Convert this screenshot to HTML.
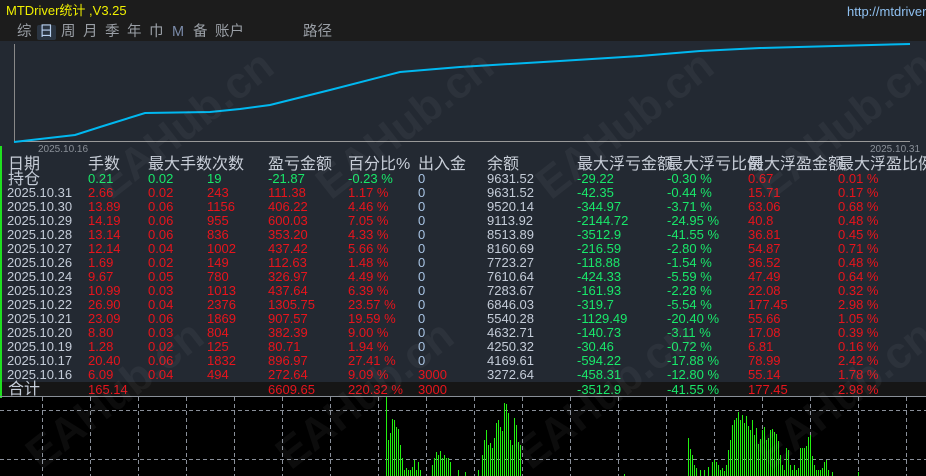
<!DOCTYPE html>
<html style="width:926px;height:476px;overflow:hidden"><head><meta charset="utf-8"><style>
*{margin:0;padding:0;box-sizing:border-box}
body{width:926px;height:476px;overflow:hidden;background:#000;font-family:"Liberation Sans","Noto Sans CJK SC",sans-serif;position:relative}
.a{position:absolute;white-space:nowrap}
#top{left:0;top:0;width:926px;height:41px;background:#1c1c1c}
#mid{left:0;top:41px;width:926px;height:341px;background:#232932}
#sum{left:0;top:382px;width:926px;height:14px;background:#161616}
.t{font-size:14.5px;color:#9a9fa6;top:24px;line-height:17px}
.r{font-size:13px;line-height:14px;height:14px}
.h{font-size:16px;color:#c8ced8;top:156px;line-height:17px}
.d{color:#c4ccd8}.R{color:#e8141c}.G{color:#19e86a}.B{color:#a8c4e4}
.wm{position:absolute;font-size:44px;font-weight:bold;color:rgba(200,200,200,0.06);transform:rotate(-38deg);white-space:nowrap}
</style></head><body>
<div class="a" id="top"></div>
<div class="a" id="mid"></div>
<div class="a" id="sum"></div>
<div class="a" style="left:0;top:146px;width:2px;height:252px;background:#20e020"></div>
<div class="a" style="left:6px;top:3px;font-size:13px;color:#f0f000;line-height:16px">MTDriver统计 ,V3.25</div>
<div class="a" style="left:847px;top:4px;font-size:13px;color:#8fc0f0;line-height:16px">http://mtdriver</div>
<div class="a" style="left:37px;top:25px;width:19px;height:15px;background:#2a3441;border-radius:2px"></div>
<div class="a t" style="left:17px">综</div><div class="a t" style="left:39px;color:#b8d0f0">日</div><div class="a t" style="left:61px">周</div><div class="a t" style="left:83px">月</div><div class="a t" style="left:105px">季</div><div class="a t" style="left:127px">年</div><div class="a t" style="left:149px">巾</div><div class="a t" style="left:172px;color:#7a8aa8">M</div><div class="a t" style="left:193px">备</div><div class="a t" style="left:215px">账户</div><div class="a t" style="left:303px">路径</div>
<svg class="a" style="left:0;top:0" width="926" height="476">
<line x1="14.5" y1="44" x2="14.5" y2="142" stroke="#888" stroke-width="1"/>
<line x1="14" y1="141.5" x2="910" y2="141.5" stroke="#999" stroke-width="1"/>
<polyline fill="none" stroke="#00b8f0" stroke-width="2" points="14,142 40,139 75,135 100,127 145,113 210,112 240,109 270,105 330,90 400,72 460,67 560,61 640,56 700,51 760,48 910,44"/>
<text x="38" y="152" font-size="10" fill="#8a9098" font-family="Liberation Sans">2025.10.16</text>
<text x="870" y="152" font-size="10" fill="#8a9098" font-family="Liberation Sans">2025.10.31</text>
<line x1="0" y1="396.5" x2="926" y2="396.5" stroke="#8a9098"/>
<g stroke="#8a909a" stroke-dasharray="4,3" stroke-width="1">
<line x1="0" y1="410.5" x2="926" y2="410.5"/><line x1="0" y1="459.5" x2="926" y2="459.5"/>
<line x1="42.5" y1="397" x2="42.5" y2="476"/><line x1="90.5" y1="397" x2="90.5" y2="476"/><line x1="138.5" y1="397" x2="138.5" y2="476"/><line x1="186.5" y1="397" x2="186.5" y2="476"/><line x1="234.5" y1="397" x2="234.5" y2="476"/><line x1="282.5" y1="397" x2="282.5" y2="476"/><line x1="330.5" y1="397" x2="330.5" y2="476"/><line x1="378.5" y1="397" x2="378.5" y2="476"/><line x1="426.5" y1="397" x2="426.5" y2="476"/><line x1="474.5" y1="397" x2="474.5" y2="476"/><line x1="522.5" y1="397" x2="522.5" y2="476"/><line x1="570.5" y1="397" x2="570.5" y2="476"/><line x1="618.5" y1="397" x2="618.5" y2="476"/><line x1="666.5" y1="397" x2="666.5" y2="476"/><line x1="714.5" y1="397" x2="714.5" y2="476"/><line x1="762.5" y1="397" x2="762.5" y2="476"/><line x1="810.5" y1="397" x2="810.5" y2="476"/><line x1="858.5" y1="397" x2="858.5" y2="476"/><line x1="906.5" y1="397" x2="906.5" y2="476"/>
</g>
<path stroke="#22f010" stroke-width="1" fill="none" d="M386.5 397V476M388.5 440V476M390.5 433V476M392.5 419V476M394.5 420V476M396.5 427V476M398.5 429V476M400.5 445V476M402.5 458V476M404.5 470V476M406.5 468V476M408.5 470V476M410.5 470V476M412.5 467V476M414.5 460V476M416.5 470V476M418.5 462V476M420.5 470V476M432.5 465V476M434.5 458V476M436.5 452V476M438.5 455V476M440.5 451V476M442.5 458V476M444.5 455V476M446.5 458V476M448.5 458V476M450.5 462V476M458.5 470V476M465.5 472V476M478.5 470V476M482.5 455V476M484.5 440V476M486.5 430V476M488.5 445V476M490.5 443V476M492.5 448V476M494.5 438V476M496.5 423V476M498.5 420V476M500.5 427V476M502.5 431V476M504.5 403V476M506.5 404V476M508.5 413V476M510.5 440V476M512.5 445V476M514.5 418V476M516.5 425V476M518.5 442V476M520.5 445V476M624.5 474V476M688.5 438V476M690.5 449V476M692.5 455V476M694.5 465V476M696.5 468V476M700.5 470V476M704.5 470V476M708.5 467V476M712.5 462V476M714.5 460V476M716.5 462V476M718.5 465V476M720.5 470V476M722.5 468V476M724.5 471V476M726.5 465V476M728.5 450V476M730.5 440V476M732.5 425V476M734.5 420V476M736.5 418V476M738.5 412V476M740.5 420V476M742.5 415V476M744.5 423V476M746.5 416V476M748.5 426V476M750.5 430V476M752.5 420V476M754.5 435V476M756.5 428V476M758.5 444V476M760.5 439V476M762.5 430V476M764.5 427V476M766.5 440V476M768.5 438V476M770.5 430V476M772.5 429V476M774.5 432V476M776.5 434V476M778.5 441V476M780.5 455V476M782.5 465V476M784.5 470V476M786.5 448V476M788.5 450V476M790.5 465V476M792.5 470V476M794.5 465V476M796.5 470V476M798.5 468V476M800.5 448V476M802.5 448V476M804.5 448V476M806.5 446V476M808.5 437V476M810.5 435V476M812.5 456V476M814.5 465V476M816.5 470V476M818.5 470V476M820.5 470V476M822.5 468V476M824.5 462V476M826.5 460V476M828.5 470V476M832.5 472V476M858.5 472V476"/>
</svg>
<div class="a h" style="left:8px">日期</div><div class="a h" style="left:88px">手数</div><div class="a h" style="left:148px">最大手数次数</div><div class="a h" style="left:268px">盈亏金额</div><div class="a h" style="left:348px">百分比%</div><div class="a h" style="left:418px">出入金</div><div class="a h" style="left:487px">余额</div><div class="a h" style="left:577px">最大浮亏金额</div><div class="a h" style="left:667px">最大浮亏比例</div><div class="a h" style="left:748px">最大浮盈金额</div><div class="a h" style="left:838px">最大浮盈比例</div>
<div class="a" style="left:0;top:172px;width:926px">
<div class="a r d" style="left:8px;top:1px;font-size:16px">持仓</div><div class="a r G" style="left:88px">0.21</div><div class="a r G" style="left:148px">0.02</div><div class="a r G" style="left:207px">19</div><div class="a r G" style="left:268px">-21.87</div><div class="a r G" style="left:348px">-0.23 %</div><div class="a r B" style="left:418px">0</div><div class="a r d" style="left:487px">9631.52</div><div class="a r G" style="left:577px">-29.22</div><div class="a r G" style="left:667px">-0.30 %</div><div class="a r R" style="left:748px">0.67</div><div class="a r R" style="left:838px">0.01 %</div>
</div>
<div class="a" style="left:0;top:186px;width:926px"><div class="a r d" style="left:7px">2025.10.31</div><div class="a r R" style="left:88px">2.66</div><div class="a r R" style="left:148px">0.02</div><div class="a r R" style="left:207px">243</div><div class="a r R" style="left:268px">111.38</div><div class="a r R" style="left:348px">1.17 %</div><div class="a r B" style="left:418px">0</div><div class="a r d" style="left:487px">9631.52</div><div class="a r G" style="left:577px">-42.35</div><div class="a r G" style="left:667px">-0.44 %</div><div class="a r R" style="left:748px">15.71</div><div class="a r R" style="left:838px">0.17 %</div></div>
<div class="a" style="left:0;top:200px;width:926px"><div class="a r d" style="left:7px">2025.10.30</div><div class="a r R" style="left:88px">13.89</div><div class="a r R" style="left:148px">0.06</div><div class="a r R" style="left:207px">1156</div><div class="a r R" style="left:268px">406.22</div><div class="a r R" style="left:348px">4.46 %</div><div class="a r B" style="left:418px">0</div><div class="a r d" style="left:487px">9520.14</div><div class="a r G" style="left:577px">-344.97</div><div class="a r G" style="left:667px">-3.71 %</div><div class="a r R" style="left:748px">63.06</div><div class="a r R" style="left:838px">0.68 %</div></div>
<div class="a" style="left:0;top:214px;width:926px"><div class="a r d" style="left:7px">2025.10.29</div><div class="a r R" style="left:88px">14.19</div><div class="a r R" style="left:148px">0.06</div><div class="a r R" style="left:207px">955</div><div class="a r R" style="left:268px">600.03</div><div class="a r R" style="left:348px">7.05 %</div><div class="a r B" style="left:418px">0</div><div class="a r d" style="left:487px">9113.92</div><div class="a r G" style="left:577px">-2144.72</div><div class="a r G" style="left:667px">-24.95 %</div><div class="a r R" style="left:748px">40.8</div><div class="a r R" style="left:838px">0.48 %</div></div>
<div class="a" style="left:0;top:228px;width:926px"><div class="a r d" style="left:7px">2025.10.28</div><div class="a r R" style="left:88px">13.14</div><div class="a r R" style="left:148px">0.06</div><div class="a r R" style="left:207px">836</div><div class="a r R" style="left:268px">353.20</div><div class="a r R" style="left:348px">4.33 %</div><div class="a r B" style="left:418px">0</div><div class="a r d" style="left:487px">8513.89</div><div class="a r G" style="left:577px">-3512.9</div><div class="a r G" style="left:667px">-41.55 %</div><div class="a r R" style="left:748px">36.81</div><div class="a r R" style="left:838px">0.45 %</div></div>
<div class="a" style="left:0;top:242px;width:926px"><div class="a r d" style="left:7px">2025.10.27</div><div class="a r R" style="left:88px">12.14</div><div class="a r R" style="left:148px">0.04</div><div class="a r R" style="left:207px">1002</div><div class="a r R" style="left:268px">437.42</div><div class="a r R" style="left:348px">5.66 %</div><div class="a r B" style="left:418px">0</div><div class="a r d" style="left:487px">8160.69</div><div class="a r G" style="left:577px">-216.59</div><div class="a r G" style="left:667px">-2.80 %</div><div class="a r R" style="left:748px">54.87</div><div class="a r R" style="left:838px">0.71 %</div></div>
<div class="a" style="left:0;top:256px;width:926px"><div class="a r d" style="left:7px">2025.10.26</div><div class="a r R" style="left:88px">1.69</div><div class="a r R" style="left:148px">0.02</div><div class="a r R" style="left:207px">149</div><div class="a r R" style="left:268px">112.63</div><div class="a r R" style="left:348px">1.48 %</div><div class="a r B" style="left:418px">0</div><div class="a r d" style="left:487px">7723.27</div><div class="a r G" style="left:577px">-118.88</div><div class="a r G" style="left:667px">-1.54 %</div><div class="a r R" style="left:748px">36.52</div><div class="a r R" style="left:838px">0.48 %</div></div>
<div class="a" style="left:0;top:270px;width:926px"><div class="a r d" style="left:7px">2025.10.24</div><div class="a r R" style="left:88px">9.67</div><div class="a r R" style="left:148px">0.05</div><div class="a r R" style="left:207px">780</div><div class="a r R" style="left:268px">326.97</div><div class="a r R" style="left:348px">4.49 %</div><div class="a r B" style="left:418px">0</div><div class="a r d" style="left:487px">7610.64</div><div class="a r G" style="left:577px">-424.33</div><div class="a r G" style="left:667px">-5.59 %</div><div class="a r R" style="left:748px">47.49</div><div class="a r R" style="left:838px">0.64 %</div></div>
<div class="a" style="left:0;top:284px;width:926px"><div class="a r d" style="left:7px">2025.10.23</div><div class="a r R" style="left:88px">10.99</div><div class="a r R" style="left:148px">0.03</div><div class="a r R" style="left:207px">1013</div><div class="a r R" style="left:268px">437.64</div><div class="a r R" style="left:348px">6.39 %</div><div class="a r B" style="left:418px">0</div><div class="a r d" style="left:487px">7283.67</div><div class="a r G" style="left:577px">-161.93</div><div class="a r G" style="left:667px">-2.28 %</div><div class="a r R" style="left:748px">22.08</div><div class="a r R" style="left:838px">0.32 %</div></div>
<div class="a" style="left:0;top:298px;width:926px"><div class="a r d" style="left:7px">2025.10.22</div><div class="a r R" style="left:88px">26.90</div><div class="a r R" style="left:148px">0.04</div><div class="a r R" style="left:207px">2376</div><div class="a r R" style="left:268px">1305.75</div><div class="a r R" style="left:348px">23.57 %</div><div class="a r B" style="left:418px">0</div><div class="a r d" style="left:487px">6846.03</div><div class="a r G" style="left:577px">-319.7</div><div class="a r G" style="left:667px">-5.54 %</div><div class="a r R" style="left:748px">177.45</div><div class="a r R" style="left:838px">2.98 %</div></div>
<div class="a" style="left:0;top:312px;width:926px"><div class="a r d" style="left:7px">2025.10.21</div><div class="a r R" style="left:88px">23.09</div><div class="a r R" style="left:148px">0.06</div><div class="a r R" style="left:207px">1869</div><div class="a r R" style="left:268px">907.57</div><div class="a r R" style="left:348px">19.59 %</div><div class="a r B" style="left:418px">0</div><div class="a r d" style="left:487px">5540.28</div><div class="a r G" style="left:577px">-1129.49</div><div class="a r G" style="left:667px">-20.40 %</div><div class="a r R" style="left:748px">55.66</div><div class="a r R" style="left:838px">1.05 %</div></div>
<div class="a" style="left:0;top:326px;width:926px"><div class="a r d" style="left:7px">2025.10.20</div><div class="a r R" style="left:88px">8.80</div><div class="a r R" style="left:148px">0.03</div><div class="a r R" style="left:207px">804</div><div class="a r R" style="left:268px">382.39</div><div class="a r R" style="left:348px">9.00 %</div><div class="a r B" style="left:418px">0</div><div class="a r d" style="left:487px">4632.71</div><div class="a r G" style="left:577px">-140.73</div><div class="a r G" style="left:667px">-3.11 %</div><div class="a r R" style="left:748px">17.08</div><div class="a r R" style="left:838px">0.39 %</div></div>
<div class="a" style="left:0;top:340px;width:926px"><div class="a r d" style="left:7px">2025.10.19</div><div class="a r R" style="left:88px">1.28</div><div class="a r R" style="left:148px">0.02</div><div class="a r R" style="left:207px">125</div><div class="a r R" style="left:268px">80.71</div><div class="a r R" style="left:348px">1.94 %</div><div class="a r B" style="left:418px">0</div><div class="a r d" style="left:487px">4250.32</div><div class="a r G" style="left:577px">-30.46</div><div class="a r G" style="left:667px">-0.72 %</div><div class="a r R" style="left:748px">6.81</div><div class="a r R" style="left:838px">0.16 %</div></div>
<div class="a" style="left:0;top:354px;width:926px"><div class="a r d" style="left:7px">2025.10.17</div><div class="a r R" style="left:88px">20.40</div><div class="a r R" style="left:148px">0.06</div><div class="a r R" style="left:207px">1832</div><div class="a r R" style="left:268px">896.97</div><div class="a r R" style="left:348px">27.41 %</div><div class="a r B" style="left:418px">0</div><div class="a r d" style="left:487px">4169.61</div><div class="a r G" style="left:577px">-594.22</div><div class="a r G" style="left:667px">-17.88 %</div><div class="a r R" style="left:748px">78.99</div><div class="a r R" style="left:838px">2.42 %</div></div>
<div class="a" style="left:0;top:368px;width:926px"><div class="a r d" style="left:7px">2025.10.16</div><div class="a r R" style="left:88px">6.09</div><div class="a r R" style="left:148px">0.04</div><div class="a r R" style="left:207px">494</div><div class="a r R" style="left:268px">272.64</div><div class="a r R" style="left:348px">9.09 %</div><div class="a r R" style="left:418px">3000</div><div class="a r d" style="left:487px">3272.64</div><div class="a r G" style="left:577px">-458.31</div><div class="a r G" style="left:667px">-12.80 %</div><div class="a r R" style="left:748px">55.14</div><div class="a r R" style="left:838px">1.78 %</div></div>
<div class="a" style="left:0;top:383px;width:926px"><div class="a r d" style="left:8px;font-size:16px">合计</div><div class="a r R" style="left:88px">165.14</div><div class="a r R" style="left:268px">6609.65</div><div class="a r R" style="left:348px">220.32 %</div><div class="a r R" style="left:418px">3000</div><div class="a r G" style="left:577px">-3512.9</div><div class="a r G" style="left:667px">-41.55 %</div><div class="a r R" style="left:748px">177.45</div><div class="a r R" style="left:838px">2.98 %</div></div>
<div class="wm" style="left:80px;top:100px">EAHub.cn</div>
<div class="wm" style="left:300px;top:100px">EAHub.cn</div>
<div class="wm" style="left:520px;top:100px">EAHub.cn</div>
<div class="wm" style="left:740px;top:100px">EAHub.cn</div>
<div class="wm" style="left:10px;top:370px">EAHub.cn</div>
<div class="wm" style="left:260px;top:370px">EAHub.cn</div>
<div class="wm" style="left:500px;top:370px">EAHub.cn</div>
<div class="wm" style="left:740px;top:370px">EAHub.cn</div>
</body></html>
